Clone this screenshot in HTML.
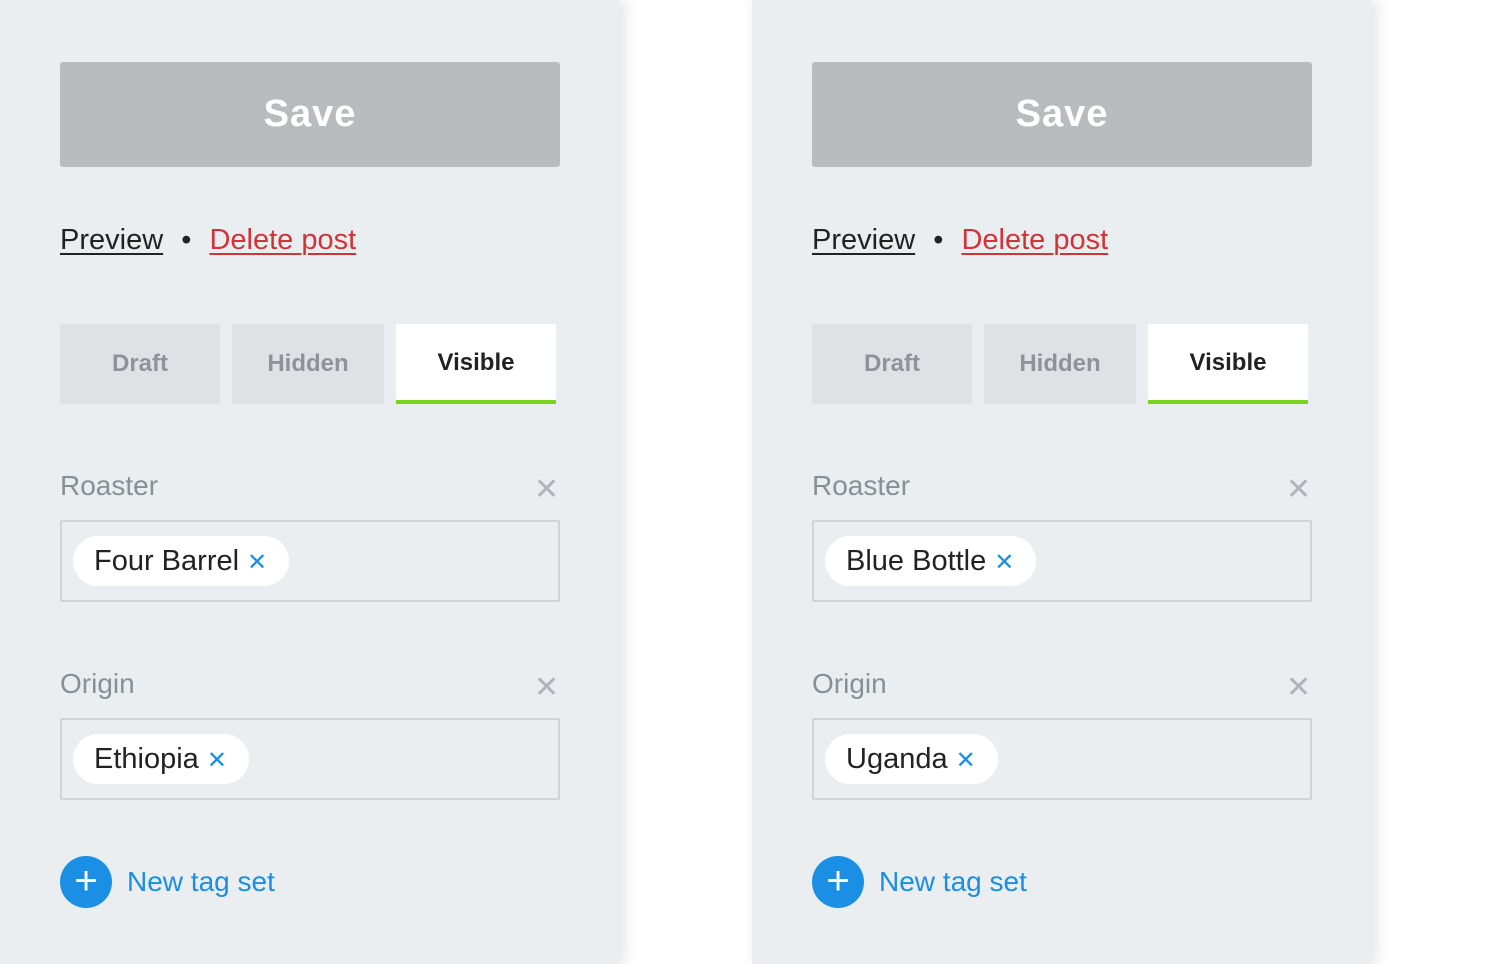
<!DOCTYPE html><html><head><style>
body{margin:0;width:1500px;height:964px;background:#fff;position:relative;overflow:hidden;font-family:"Liberation Sans",sans-serif}
.p{position:absolute;top:0;width:620px;height:964px;background:#eaeef1;box-shadow:4px 0 14px rgba(0,0,0,.12)}
.a{position:absolute}
.save{left:60px;top:62px;width:500px;height:105px;background:#b8bcbf;border-radius:3px;color:#fff;font-weight:bold;font-size:38px;text-align:center;line-height:105px;letter-spacing:1px}
.lk{top:224px;left:60px;font-size:29px;color:#222}
.lk u{text-decoration-thickness:2px;text-underline-offset:4px}
.tab{top:324px;height:80px;background:#dfe2e5;color:#8f9397;font-weight:bold;font-size:24px;text-align:center;line-height:80px;box-sizing:border-box}
.lbl{left:60px;font-size:28px;color:#8a8f93}
.x{left:534px;font-size:30px;color:#b0b4b8;line-height:1}
.box{left:60px;width:500px;height:82px;border:2px solid #d0d4d7;box-sizing:border-box;border-radius:2px}
.chip{position:absolute;left:11px;top:14px;height:50px;background:#fff;border-radius:25px;font-size:29px;color:#222;line-height:50px;padding:0 22px 0 21px}
.chip b{font-weight:normal;color:#1a8fe3;font-size:24px;margin-left:8px}
.plus{left:60px;top:856px;width:52px;height:52px;border-radius:50%;background:#1a8fe3;color:#fff;font-size:40px;line-height:50px;text-align:center}
.nt{left:127px;top:866px;font-size:28px;color:#1a8fe3}
</style></head><body>
<div class="p" style="left:0">
<div class="a save">Save</div>
<div class="a lk"><u>Preview</u> <span style="margin:0 10px">•</span> <u style="color:#d0343a">Delete post</u></div>
<div class="a tab" style="left:60px;width:160px">Draft</div>
<div class="a tab" style="left:232px;width:152px">Hidden</div>
<div class="a tab" style="left:396px;width:160px;background:#fff;color:#222;border-bottom:4px solid #7ed321;line-height:78px">Visible</div>
<div class="a lbl" style="top:470px">Roaster</div><div class="a x" style="top:475px">✕</div>
<div class="a box" style="top:520px"><div class="chip">Four Barrel<b>✕</b></div></div>
<div class="a lbl" style="top:668px">Origin</div><div class="a x" style="top:673px">✕</div>
<div class="a box" style="top:718px"><div class="chip">Ethiopia<b>✕</b></div></div>
<div class="a plus">+</div><div class="a nt">New tag set</div>
</div>
<div class="p" style="left:752px">
<div class="a save">Save</div>
<div class="a lk"><u>Preview</u> <span style="margin:0 10px">•</span> <u style="color:#d0343a">Delete post</u></div>
<div class="a tab" style="left:60px;width:160px">Draft</div>
<div class="a tab" style="left:232px;width:152px">Hidden</div>
<div class="a tab" style="left:396px;width:160px;background:#fff;color:#222;border-bottom:4px solid #7ed321;line-height:78px">Visible</div>
<div class="a lbl" style="top:470px">Roaster</div><div class="a x" style="top:475px">✕</div>
<div class="a box" style="top:520px"><div class="chip">Blue Bottle<b>✕</b></div></div>
<div class="a lbl" style="top:668px">Origin</div><div class="a x" style="top:673px">✕</div>
<div class="a box" style="top:718px"><div class="chip">Uganda<b>✕</b></div></div>
<div class="a plus">+</div><div class="a nt">New tag set</div>
</div>
</body></html>
